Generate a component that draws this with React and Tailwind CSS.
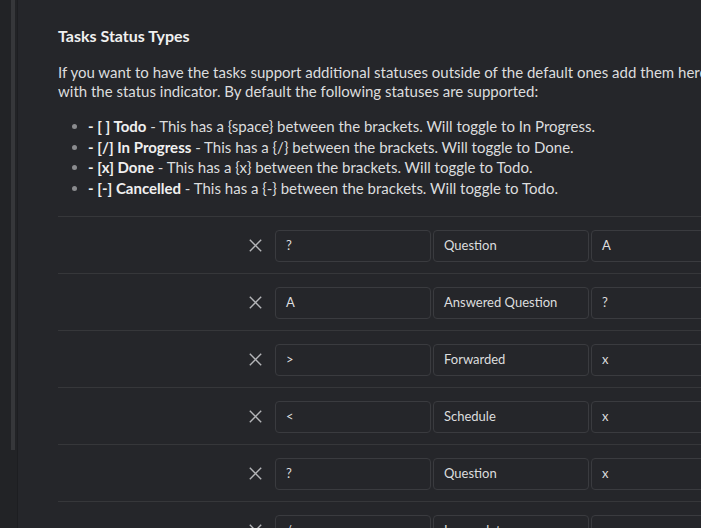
import React from "react";

const rows = [
  ["?", "Question", "A"],
  ["A", "Answered Question", "?"],
  [">", "Forwarded", "x"],
  ["<", "Schedule", "x"],
  ["?", "Question", "x"],
  ["/", "Incomplete", "x"],
];

const items = [
  ["- [ ] Todo", " - This has a {space} between the brackets. Will toggle to In Progress."],
  ["- [/] In Progress", " - This has a {/} between the brackets. Will toggle to Done."],
  ["- [x] Done", " - This has a {x} between the brackets. Will toggle to Todo."],
  ["- [-] Cancelled", " - This has a {-} between the brackets. Will toggle to Todo."],
];

function XIcon() {
  return (
    <svg width="13" height="13" viewBox="0 0 13 13" fill="none" stroke="#b4b5b8" strokeWidth="1.4" strokeLinecap="butt">
      <path d="M0.8 0.8 L12.2 12.2 M12.2 0.8 L0.8 12.2" />
    </svg>
  );
}

function Field({ value }) {
  return (
    <div className="w-[156px] h-[32px] shrink-0 rounded-[4px] border border-[#3a3b3f] bg-[#25262a] flex items-center px-[10px] text-[13px] text-[#dcddde]">
      {value}
    </div>
  );
}

export default function App() {
  return (
    <div
      className="w-[701px] h-[528px] overflow-hidden flex bg-[#25262a] text-[#dcddde]"
      style={{ fontFamily: "Lato, 'Noto Sans', sans-serif" }}
    >
      <div className="w-[18px] shrink-0 h-full bg-[#222326] border-r border-[#1d1e21] flex">
        <div className="ml-[11px] w-[4px] h-[450px] bg-[#36373a]" />
      </div>
      <div className="flex-1 min-w-0 pl-[40px] pt-[24px]">
        <div className="w-[900px]">
          <h2 className="text-[16px] leading-[24px] font-bold text-[#f0f0f0]">Tasks Status Types</h2>
          <div className="mt-[15px] text-[15px] leading-[19px]">
            <div className="whitespace-nowrap">If you want to have the tasks support additional statuses outside of the default ones add them here along</div>
            <div className="whitespace-nowrap">with the status indicator. By default the following statuses are supported:</div>
          </div>
          <div className="mt-[15px] text-[15px] leading-[20.7px]">
            {items.map(([b, t], i) => (
              <div key={i} className="flex items-center whitespace-nowrap">
                <span className="w-[5px] h-[5px] rounded-full bg-[#8a8b8e] ml-[14px] mr-[11px] shrink-0" />
                <span>
                  <span className="font-bold text-[#f0f0f0]">{b}</span>
                  {t}
                </span>
              </div>
            ))}
          </div>
          <div className="mt-[17px]">
            {rows.map((r, i) => (
              <div key={i} className="border-t border-[#36373a] pt-[13px] pb-[11px] flex items-center pl-[190px]">
                <div className="w-[14px] flex justify-center">
                  <XIcon />
                </div>
                <div className="ml-[13px] flex gap-[2px]">
                  <Field value={r[0]} />
                  <Field value={r[1]} />
                  <Field value={r[2]} />
                </div>
              </div>
            ))}
          </div>
        </div>
      </div>
    </div>
  );
}
